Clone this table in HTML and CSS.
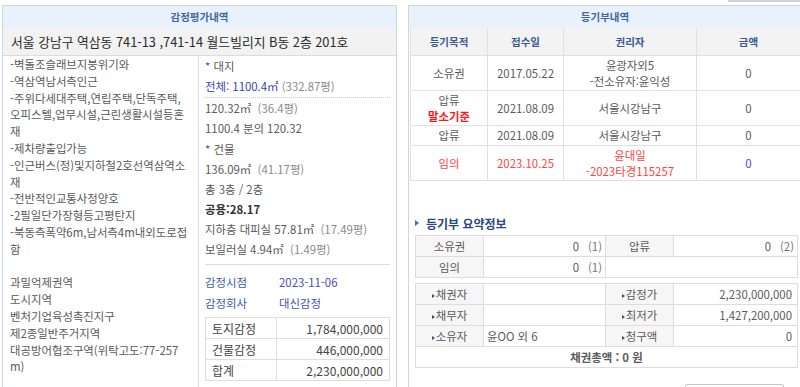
FILE: index.html
```html
<!DOCTYPE html>
<html lang="ko">
<head>
<meta charset="utf-8">
<title>감정평가내역 / 등기부내역</title>
<link rel="stylesheet" href="styles.css">
</head>
<body>
<div class="page">
  <section class="panel panel-appraisal">
    <h2 class="panel-title">감정평가내역</h2>
    <div class="address">서울 강남구 역삼동 741-13 ,741-14 월드빌리지 B동 2층 201호</div>
    <div class="appraisal-body">
      <div class="desc">
        <p class="desc-block">-벽돌조슬래브지붕위기와<br>-역삼역남서측인근<br>-주위다세대주택,연립주택,단독주택,<br>오피스텔,업무시설,근린생활시설등혼<br>재<br>-제차량출입가능<br>-인근버스(정)및지하철2호선역삼역소<br>재<br>-전반적인교통사정양호<br>-2필일단가장형등고평탄지<br>-북동측폭약6m,남서측4m내외도로접<br>함</p>
        <p class="desc-block zoning">과밀억제권역<br>도시지역<br>벤처기업육성촉진지구<br>제2종일반주거지역<br>대공방어협조구역(위탁고도:77-257<br>m)</p>
      </div>
      <div class="detail">
        <div class="area-group">
          <div class="line">* 대지</div>
          <div class="line"><span class="accent">전체: 1100.4㎡</span> <span class="muted">(332.87평)</span></div>
          <div class="line dotted">120.32㎡ &nbsp;<span class="muted">(36.4평)</span></div>
          <div class="line">1100.4 분의 120.32</div>
        </div>
        <div class="area-group">
          <div class="line">* 건물</div>
          <div class="line">136.09㎡ &nbsp;<span class="muted">(41.17평)</span></div>
          <div class="line">총 3층 / 2층</div>
          <div class="line strong">공용:28.17</div>
          <div class="line">지하층 대피실 57.81㎡ &nbsp;<span class="muted">(17.49평)</span></div>
          <div class="line">보일러실 4.94㎡ &nbsp;<span class="muted">(1.49평)</span></div>
        </div>
        <div class="appraisal-meta">
          <dl class="meta">
            <dt>감정시점</dt><dd>2023-11-06</dd>
            <dt>감정회사</dt><dd>대신감정</dd>
          </dl>
          <table class="amounts">
            <tr><td>토지감정</td><td class="num">1,784,000,000</td></tr>
            <tr><td>건물감정</td><td class="num">446,000,000</td></tr>
            <tr><td>합계</td><td class="num">2,230,000,000</td></tr>
          </table>
        </div>
      </div>
    </div>
  </section>

  <div class="side">
    <div class="top-tab"></div>
    <section class="panel panel-register">
      <h2 class="panel-title">등기부내역</h2>
      <table class="register">
        <colgroup><col class="c-purpose"><col class="c-date"><col class="c-holder"><col class="c-amount"></colgroup>
        <thead>
          <tr><th>등기목적</th><th>접수일</th><th>권리자</th><th>금액</th></tr>
        </thead>
        <tbody>
          <tr><td>소유권</td><td>2017.05.22</td><td>윤광자외5<br>-전소유자:윤익성</td><td>0</td></tr>
          <tr><td>압류<br><span class="base">말소기준</span></td><td>2021.08.09</td><td>서울시강남구</td><td>0</td></tr>
          <tr><td>압류</td><td>2021.08.09</td><td>서울시강남구</td><td>0</td></tr>
          <tr class="hot"><td>임의</td><td>2023.10.25</td><td>윤대일<br>-2023타경115257</td><td class="blue">0</td></tr>
        </tbody>
      </table>

      <h3 class="summary-title">등기부 요약정보</h3>
      <table class="summary">
        <colgroup><col class="s-label"><col class="s-value"><col class="s-label"><col class="s-value2"></colgroup>
        <tr><td class="label">소유권</td><td class="num">0<span class="count">(1)</span></td><td class="label">압류</td><td class="num">0<span class="count">(2)</span></td></tr>
        <tr><td class="label">임의</td><td class="num">0<span class="count">(1)</span></td><td colspan="2"></td></tr>
      </table>
      <table class="summary parties">
        <colgroup><col class="s-label"><col class="s-value"><col class="s-label"><col class="s-value2"></colgroup>
        <tr><td class="label mark">채권자</td><td></td><td class="label mark">감정가</td><td class="num blue">2,230,000,000</td></tr>
        <tr><td class="label mark">채무자</td><td></td><td class="label mark">최저가</td><td class="num blue">1,427,200,000</td></tr>
        <tr><td class="label mark">소유자</td><td class="owner">윤OO 외 6</td><td class="label mark">청구액</td><td class="num red">0</td></tr>
        <tr><td colspan="4" class="total">채권총액 : 0 원</td></tr>
      </table>
      <div class="actions"><button class="btn" type="button"></button></div>
    </section>
  </div>
</div>
</body>
</html>
```

FILE: styles.css
```css
* { box-sizing: border-box; }

html, body {
  margin: 0;
  padding: 0;
  overflow: hidden;
  background: #fff;
}

body {
  width: 800px;
  height: 387px;
  font-family: "Noto Sans CJK KR", "Noto Sans", sans-serif;
  font-size: 11.4px;
  color: #5a5a5a;
}

.page {
  display: flex;
  align-items: flex-start;
  gap: 11px;
  padding-left: 2px;
  width: 820px;
}

.panel {
  border: 1px solid #c9d6e6;
  border-bottom: none;
  background: #fff;
}

.panel-title {
  margin: 0;
  height: 22px;
  line-height: 22px;
  background: #e9f2fc;
  text-align: center;
  font-size: 10.5px;
  font-weight: bold;
  color: #3f67a6;
}

/* ---------- left: appraisal ---------- */
.panel-appraisal {
  flex: none;
  width: 395px;
  margin-top: 5px;
  height: 400px;
}

.address {
  height: 28px;
  line-height: 27px;
  padding-left: 8px;
  background: #f2f2f2;
  border-bottom: 1px solid #dcdcdc;
  font-size: 12.8px;
  color: #2a2a2a;
  white-space: nowrap;
}

.appraisal-body {
  display: grid;
  grid-template-columns: 196px 197px;
  height: 360px;
}

.desc {
  border-right: 1px solid #dcdcdc;
  padding-left: 7px;
  white-space: nowrap;
}

.desc-block {
  margin: 0;
  line-height: 16.8px;
}

.desc-block.zoning {
  margin-top: 16.8px;
}

.detail {
  padding: 0 6px 0 6px;
}

.line {
  line-height: 20px;
  white-space: nowrap;
}

.line.dotted {
  margin-top: 1px;
  border-top: 1px dotted #cfcfcf;
}

.area-group + .area-group {
  margin-top: 1px;
}

.accent { color: #3b3fb4; }
.muted { color: #8a8a8a; }
.strong { font-weight: bold; color: #333; }

.appraisal-meta {
  margin-top: 5px;
  padding-top: 7px;
  border-top: 1px solid #dddddd;
}

.meta {
  display: grid;
  grid-template-columns: 74px 1fr;
  margin: 0;
  line-height: 21px;
}

.meta dt { color: #3c5ca8; }
.meta dd { margin: 0; color: #4b4bbf; }

.amounts {
  width: 100%;
  margin-top: 3px;
  border-collapse: collapse;
  table-layout: fixed;
  font-size: 12px;
}

.amounts td {
  height: 21px;
  padding: 0 6px;
  border: 1px solid #dedede;
  color: #444;
}

.amounts td:first-child { width: 71px; }
.amounts .num { text-align: right; }

/* ---------- right: register ---------- */
.side {
  flex: none;
  display: flex;
  flex-direction: column;
  width: 394px;
}

.top-tab {
  align-self: flex-end;
  width: 73px;
  height: 2px;
  margin: 0 1px 3px 0;
  background: #d2d2d2;
}

.panel-register {
  height: 420px;
}

.register {
  width: 390px;
  margin-left: 1px;
  border-collapse: collapse;
  table-layout: fixed;
}

.c-purpose { width: 77px; }
.c-date { width: 76px; }
.c-holder { width: 133px; }
.c-amount { width: 104px; }

.register th {
  height: 27px;
  padding: 0;
  background: #f3f3f3;
  border: 1px solid #e0e0e0;
  border-top: none;
  font-size: 10.5px;
  font-weight: bold;
  color: #3b5b92;
}

.register td {
  height: 20px;
  padding: 1px 2px;
  line-height: 16px;
  text-align: center;
  border: 1px solid #e0e0e0;
  color: #5a5a5a;
}

.register .base {
  color: #ff1a1a;
  font-weight: bold;
}

.register tr.hot td { color: #ff4343; }
.register tr.hot td.blue { color: #4646ff; }

.summary-title {
  display: flex;
  align-items: center;
  gap: 7px;
  margin: 34px 0 3px 6px;
  line-height: 17px;
  font-size: 12px;
  font-weight: bold;
  color: #27487f;
}

.summary-title::before {
  content: "";
  width: 0;
  height: 0;
  border-left: 4px solid #3a6cc0;
  border-top: 3px solid transparent;
  border-bottom: 3px solid transparent;
}

.summary {
  width: 382px;
  margin: 0 3px 0 6px;
  border-collapse: collapse;
  table-layout: fixed;
}

.s-label { width: 68px; }
.s-value { width: 122px; }
.s-value2 { width: 124px; }

.summary td {
  height: 21px;
  padding: 0 3px;
  border: 1px solid #dddddd;
  color: #5a5a5a;
}

.summary .label {
  background: #f6f6f6;
  text-align: center;
}

.summary .num { text-align: right; }

.count {
  margin-left: 9px;
  color: #777;
}

.parties {
  margin-top: 5px;
}

.parties td.num { padding-right: 5px; }

.label.mark::before {
  content: "";
  display: inline-block;
  width: 0;
  height: 0;
  margin-right: 1px;
  vertical-align: 1px;
  border-left: 3px solid #2d4f8a;
  border-top: 2.5px solid transparent;
  border-bottom: 2.5px solid transparent;
}

.owner {
  color: #3a64a5;
}

.blue { color: #3c48c8; }
.red { color: #ff4a4a; }

.total {
  text-align: center;
  font-weight: bold;
  color: #dc3a3a;
}

.actions {
  display: flex;
  justify-content: flex-end;
  padding: 16px 17px 0 0;
}

.btn {
  width: 99px;
  height: 22px;
  padding: 0;
  border: 1px solid #c8c8c8;
  border-radius: 2px;
  background: #fff;
}
```
